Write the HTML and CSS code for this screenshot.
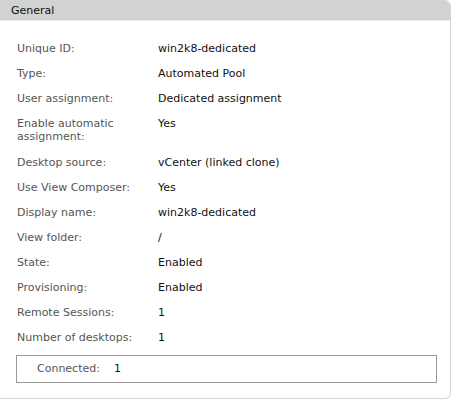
FILE: index.html
```html
<!DOCTYPE html>
<html>
<head>
<meta charset="utf-8">
<link rel="stylesheet" href="styles.css">
</head>
<body>
<div class="panel">
  <div class="panel-header">General</div>
  <div class="panel-body">
    <table class="props">
      <tr><td class="label">Unique ID:</td><td class="value">win2k8-dedicated</td></tr>
      <tr><td class="label">Type:</td><td class="value">Automated Pool</td></tr>
      <tr><td class="label">User assignment:</td><td class="value">Dedicated assignment</td></tr>
      <tr class="tall"><td class="label">Enable automatic assignment:</td><td class="value">Yes</td></tr>
      <tr><td class="label">Desktop source:</td><td class="value">vCenter (linked clone)</td></tr>
      <tr><td class="label">Use View Composer:</td><td class="value">Yes</td></tr>
      <tr><td class="label">Display name:</td><td class="value">win2k8-dedicated</td></tr>
      <tr><td class="label">View folder:</td><td class="value">/</td></tr>
      <tr><td class="label">State:</td><td class="value">Enabled</td></tr>
      <tr><td class="label">Provisioning:</td><td class="value">Enabled</td></tr>
      <tr><td class="label">Remote Sessions:</td><td class="value">1</td></tr>
      <tr><td class="label">Number of desktops:</td><td class="value">1</td></tr>
    </table>
    <div class="subbox">
      <span class="label">Connected:</span><span class="value sub-value">1</span>
    </div>
  </div>
</div>
</body>
</html>
```
FILE: styles.css
```css
html, body {
  margin: 0;
  padding: 0;
  background: #ffffff;
}
body {
  font-family: "DejaVu Sans", Verdana, sans-serif;
  font-size: 11px;
}
.panel {
  width: 451px;
  height: 399px;
  box-sizing: border-box;
  border: 1px solid #d6d6d6;
  border-left: none;
  border-radius: 0 6px 6px 0;
  overflow: hidden;
}
.panel-header {
  height: 19px;
  background: #d2d2d2;
  border-bottom: 1px solid #ebebeb;
  color: #111;
  padding-left: 11px;
  line-height: 19px;
  font-size: 11px;
}
.panel-body {
  padding: 21px 0 0 0;
}
.props {
  border-collapse: collapse;
  margin-left: 17px;
}
.props td {
  padding: 0;
  height: 25px;
  vertical-align: top;
  line-height: 13px;
}
.props tr.tall td {
  height: 39px;
}
.props td.label {
  width: 141px;
}
.label {
  color: #555555;
}
.value {
  color: #111111;
}
.subbox {
  margin: -1px 0 0 16px;
  width: 421px;
  height: 28px;
  box-sizing: border-box;
  border: 1px solid #999999;
  display: flex;
  align-items: center;
  padding-left: 20px;
  padding-bottom: 1px;
}
.sub-value {
  margin-left: 14px;
}
```
